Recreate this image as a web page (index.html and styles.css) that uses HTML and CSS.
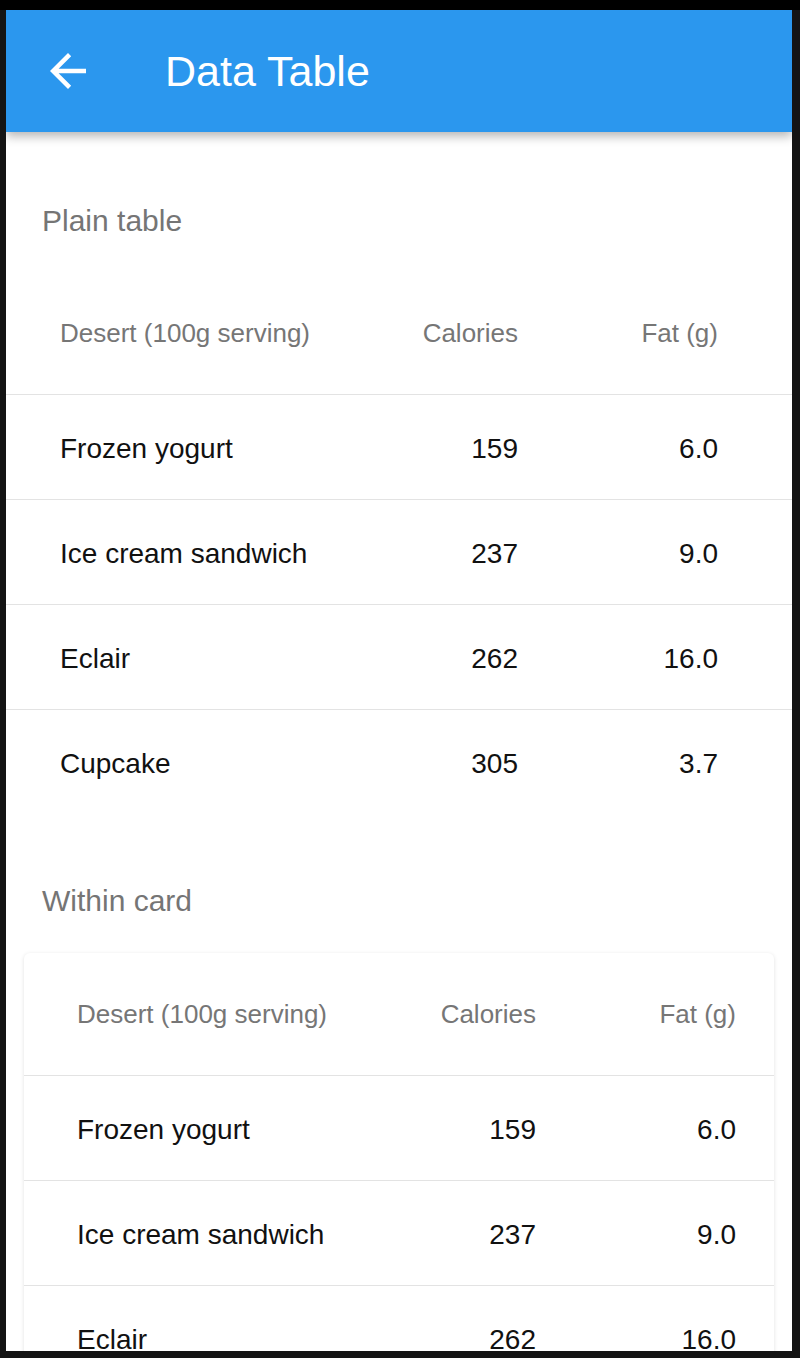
FILE: index.html
```
<!DOCTYPE html>
<html lang="en">
<head>
  <meta charset="UTF-8">
  <meta name="viewport" content="width=device-width, initial-scale=1.0">
  <title>Data Table</title>
  <link rel="stylesheet" href="styles.css">
</head>
<body>
  <div class="status-bar"></div>
  <div class="screen">
    <header class="app-bar">
      <button class="back-button" aria-label="Back">
        <svg viewBox="0 0 24 24" width="54" height="54"><path d="M20 11H7.83l5.59-5.59L12 4l-8 8 8 8 1.41-1.41L7.83 13H20v-2z" fill="#fff"/></svg>
      </button>
      <h1 class="app-title">Data Table</h1>
    </header>

    <main class="content">
      <h2 class="section-title">Plain table</h2>
      <div class="data-table plain">
        <div class="row head">
          <span>Desert (100g serving)</span>
          <span class="num">Calories</span>
          <span class="num">Fat (g)</span>
        </div>
        <div class="row"><span>Frozen yogurt</span><span class="num">159</span><span class="num">6.0</span></div>
        <div class="row"><span>Ice cream sandwich</span><span class="num">237</span><span class="num">9.0</span></div>
        <div class="row"><span>Eclair</span><span class="num">262</span><span class="num">16.0</span></div>
        <div class="row"><span>Cupcake</span><span class="num">305</span><span class="num">3.7</span></div>
      </div>

      <h2 class="section-title second">Within card</h2>
      <div class="card">
        <div class="data-table in-card">
          <div class="row head">
            <span>Desert (100g serving)</span>
            <span class="num">Calories</span>
            <span class="num">Fat (g)</span>
          </div>
          <div class="row"><span>Frozen yogurt</span><span class="num">159</span><span class="num">6.0</span></div>
          <div class="row"><span>Ice cream sandwich</span><span class="num">237</span><span class="num">9.0</span></div>
          <div class="row"><span>Eclair</span><span class="num">262</span><span class="num">16.0</span></div>
          <div class="row"><span>Cupcake</span><span class="num">305</span><span class="num">3.7</span></div>
        </div>
      </div>
    </main>
  </div>
</body>
</html>
```

FILE: styles.css
```
/* Device frame */
body {
  margin: 0;
  height: 1358px;
  overflow: hidden;
  background: #141414;
  font-family: 'Liberation Sans', Arial, sans-serif;
}

.status-bar {
  height: 10px;
  background: #000;
}

.screen {
  margin: 0 8px 0 6px;
  height: 1341px;
  overflow: hidden;
  background: #fff;
}

/* App bar */
.app-bar {
  position: relative;
  z-index: 1;
  display: flex;
  align-items: center;
  height: 122px;
  padding-left: 35px;
  background: #2b97ee;
  box-shadow: 0 4px 10px rgba(0, 0, 0, 0.3);
}

.back-button {
  display: flex;
  padding: 0;
  border: none;
  background: none;
}

.app-title {
  margin: 0 0 0 70px;
  font-size: 43px;
  font-weight: normal;
  color: #fff;
}

/* Content */
.content {
  padding-top: 71px;
}

.section-title {
  margin: 0 0 0 36px;
  height: 36px;
  line-height: 36px;
  font-size: 30px;
  font-weight: normal;
  color: #757575;
}

.section-title.second {
  margin-top: 69px;
}

.data-table {
  margin-top: 33px;
}

.row {
  box-sizing: border-box;
  display: grid;
  grid-template-columns: 1fr 150px 200px;
  align-items: center;
  height: 105px;
  padding-top: 3px;
  border-top: 1px solid #e3e3e3;
  font-size: 28px;
  color: #111;
}

.row.head {
  height: 122px;
  padding-top: 0;
  border-top: none;
  font-size: 26px;
  color: #767676;
}

.row .num {
  text-align: right;
}

.plain .row {
  padding-left: 54px;
  padding-right: 74px;
}

/* Card */
.card {
  margin: 34px 18px 0;
  border-radius: 6px;
  background: #fff;
  box-shadow: 0 1px 4px rgba(0, 0, 0, 0.12);
}

.card .data-table {
  margin-top: 0;
}

.in-card .row {
  padding-left: 53px;
  padding-right: 38px;
}
```
